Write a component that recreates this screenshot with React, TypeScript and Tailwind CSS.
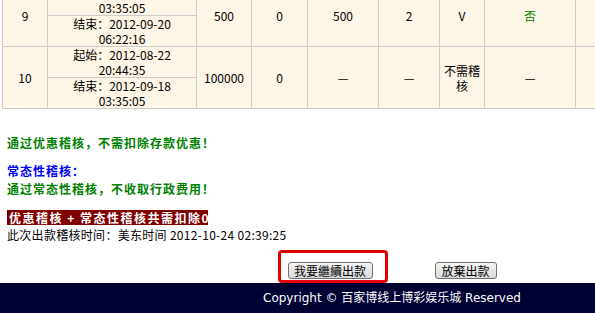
const td = "border border-[#cccccc] p-0 text-center align-middle";

function TimeLines({ a, b }: { a: string; b: string }) {
  return (
    <>
      {a}
      <br />
      {b}
    </>
  );
}

export default function App() {
  return (
    <div className="h-[313px] w-[595px] overflow-hidden bg-white font-['Noto_Sans_CJK_SC',sans-serif] text-[12px] text-black">
      <div className="w-[784px]">
        <div className="h-[109px] overflow-hidden pl-[2px]">
          <table className="-mt-[16px] w-[780px] table-fixed border-collapse bg-[#fdf5e6] leading-[15px]">
            <colgroup>
              <col className="w-[45px]" />
              <col className="w-[149px]" />
              <col className="w-[55px]" />
              <col className="w-[56px]" />
              <col className="w-[71px]" />
              <col className="w-[61px]" />
              <col className="w-[45px]" />
              <col className="w-[91px]" />
              <col />
            </colgroup>
            <tbody>
              <tr className="h-[31px]">
                <td rowSpan={2} className={td}>9</td>
                <td className={td}>
                  <TimeLines a="起始：2012-08-20" b="03:35:05" />
                </td>
                <td rowSpan={2} className={td}>500</td>
                <td rowSpan={2} className={td}>0</td>
                <td rowSpan={2} className={td}>500</td>
                <td rowSpan={2} className={td}>2</td>
                <td rowSpan={2} className={td}>V</td>
                <td rowSpan={2} className={`${td} text-[#008000]`}>否</td>
                <td rowSpan={2} className={td}></td>
              </tr>
              <tr className="h-[31px]">
                <td className={td}>
                  <TimeLines a="结束：2012-09-20" b="06:22:16" />
                </td>
              </tr>
              <tr className="h-[31px]">
                <td rowSpan={2} className={td}>10</td>
                <td className={td}>
                  <TimeLines a="起始：2012-08-22" b="20:44:35" />
                </td>
                <td rowSpan={2} className={td}>100000</td>
                <td rowSpan={2} className={td}>0</td>
                <td rowSpan={2} className={td}>—</td>
                <td rowSpan={2} className={td}>—</td>
                <td rowSpan={2} className={`${td} px-[4px]`}>不需稽核</td>
                <td rowSpan={2} className={td}>—</td>
                <td rowSpan={2} className={td}></td>
              </tr>
              <tr className="h-[30px]">
                <td className={td}>
                  <TimeLines a="结束：2012-09-18" b="03:35:05" />
                </td>
              </tr>
            </tbody>
          </table>
        </div>

        <div className="pl-[7px] leading-[18px]">
          <p className="mt-[25px] font-bold tracking-[1px] text-[#008000]">通过优惠稽核，不需扣除存款优惠！</p>
          <p className="mt-[10px] font-bold tracking-[1px] text-[#0000ff]">常态性稽核：</p>
          <p className="font-bold tracking-[1px] text-[#008000]">通过常态性稽核，不收取行政费用！</p>
          <div className="mt-[12px] flex">
            <span className="h-[15px] w-[201px] whitespace-pre bg-[#800000] px-[2px] text-[12px] font-bold leading-[15px] tracking-[1.5px] text-white">
              {"优惠稽核 + 常态性稽核共需扣除0"}
            </span>
          </div>
          <p className="mt-[1px] tracking-[0.3px]">此次出款稽核时间：美东时间 2012-10-24 02:39:25</p>
        </div>

        <div className="flex h-[39px] justify-center gap-[62px] pt-[18px]">
          <div className="relative">
            <button className="h-[17px] w-[85px] rounded-[3px] border border-[#707070] bg-gradient-to-b from-[#f4f4f4] to-[#dadada] text-[12px] leading-[15px] text-black">
              我要繼續出款
            </button>
            <div className="absolute -top-[12px] -left-[10px] h-[33px] w-[110px] rounded-[4px] border-[3px] border-[#e50000]" />
          </div>
          <button className="h-[17px] w-[62px] rounded-[3px] border border-[#707070] bg-gradient-to-b from-[#f4f4f4] to-[#dadada] text-[12px] leading-[15px] text-black">
            放棄出款
          </button>
        </div>

        <div className="flex h-[30px] items-center justify-center bg-[#000033] font-['DejaVu_Sans','Noto_Sans_CJK_SC',sans-serif] text-[12px] text-white">
          Copyright © 百家博线上博彩娱乐城 Reserved
        </div>
      </div>
    </div>
  );
}
